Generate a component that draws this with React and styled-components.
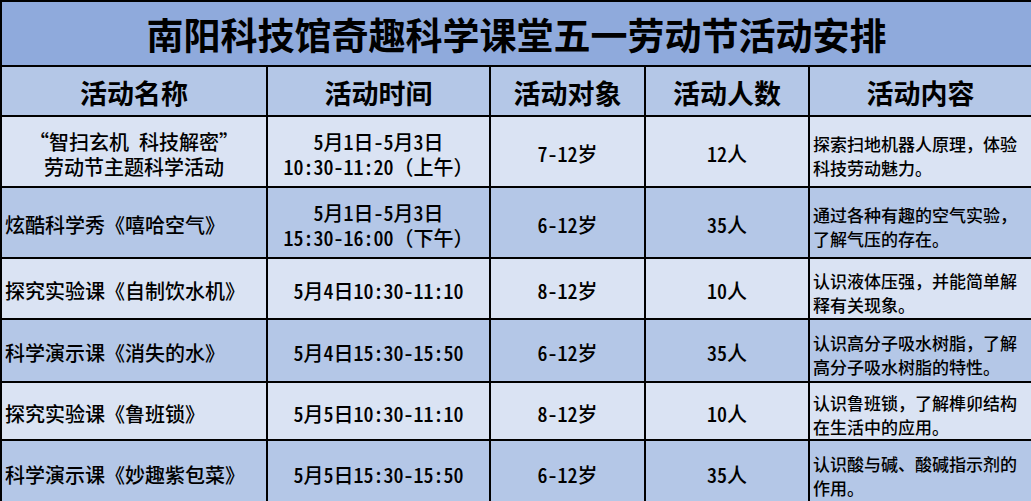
import React from 'react';
import styled, { createGlobalStyle } from 'styled-components';

const GlobalStyle = createGlobalStyle`
  html, body {
    margin: 0;
    padding: 0;
    background: #ffffff;
  }
  body {
    font-family: "Noto Sans CJK SC", "Noto Sans", sans-serif;
    color: #000000;
  }
`;

const Sheet = styled.table`
  width: 1031px;
  border-collapse: collapse;
  table-layout: fixed;
`;

const TitleRow = styled.tr`
  height: 65px;
  background: #8faadc;
`;

const TitleCell = styled.td`
  border: 2px solid #000;
  text-align: center;
  font-size: 37px;
  font-weight: 700;
  padding: 0;
`;

const HeadRow = styled.tr`
  height: 50px;
  background: #b4c7e7;
`;

const HeadCell = styled.th`
  border: 2px solid #000;
  text-align: center;
  font-size: 27px;
  font-weight: 700;
  padding: 2px 0 0;
`;

const BodyRow = styled.tr`
  height: ${p => p.$h}px;
  background: ${p => (p.$alt ? '#b4c7e7' : '#dae3f3')};
`;

const Cell = styled.td`
  border: 2px solid #000;
  text-align: ${p => p.$align || 'center'};
  font-size: 20px;
  font-weight: 500;
  line-height: 25px;
  padding: ${p => (p.$align === 'left' ? '4px 0 0 3px' : '4px 0 0')};
  white-space: nowrap;
`;

const NoteCell = styled.td`
  border: 2px solid #000;
  text-align: left;
  font-size: 17px;
  font-weight: 500;
  line-height: 24px;
  padding: 8px 4px 0 3px;
`;

// latin runs use the half-width forms, like a Hei font would
const Half = styled.span`
  font-feature-settings: "hwid";
`;

const columns = [266, 223, 155, 164, 223];
const heads = ['活动名称', '活动时间', '活动对象', '活动人数', '活动内容'];

const rows = [
  {
    h: 71,
    name: ['“智扫玄机 科技解密”', '劳动节主题科学活动'],
    center: true,
    time: ['5月1日-5月3日', '10:30-11:20（上午）'],
    age: '7-12岁',
    count: '12人',
    note: '探索扫地机器人原理，体验科技劳动魅力。',
  },
  {
    h: 71,
    name: ['炫酷科学秀《嘻哈空气》'],
    time: ['5月1日-5月3日', '15:30-16:00（下午）'],
    age: '6-12岁',
    count: '35人',
    note: '通过各种有趣的空气实验，了解气压的存在。',
  },
  {
    h: 61,
    name: ['探究实验课《自制饮水机》'],
    time: ['5月4日10:30-11:10'],
    age: '8-12岁',
    count: '10人',
    note: '认识液体压强，并能简单解释有关现象。',
  },
  {
    h: 63,
    name: ['科学演示课《消失的水》'],
    time: ['5月4日15:30-15:50'],
    age: '6-12岁',
    count: '35人',
    note: '认识高分子吸水树脂，了解高分子吸水树脂的特性。',
  },
  {
    h: 56,
    name: ['探究实验课《鲁班锁》'],
    time: ['5月5日10:30-11:10'],
    age: '8-12岁',
    count: '10人',
    note: '认识鲁班锁，了解榫卯结构在生活中的应用。',
  },
  {
    h: 64,
    name: ['科学演示课《妙趣紫包菜》'],
    time: ['5月5日15:30-15:50'],
    age: '6-12岁',
    count: '35人',
    note: '认识酸与碱、酸碱指示剂的作用。',
  },
];

const Text = ({ value }) =>
  value
    .split(/([\x20-\x7E“”]+)/)
    .map((part, i) => (i % 2 === 1 ? <Half key={i}>{part}</Half> : part));

const Lines = ({ items }) =>
  items.map((t, i) => (
    <React.Fragment key={i}>
      {i > 0 && <br />}
      <Text value={t} />
    </React.Fragment>
  ));

export default function App() {
  return (
    <>
      <GlobalStyle />
      <Sheet>
        <colgroup>
          {columns.map((w, i) => (
            <col key={i} style={{ width: w }} />
          ))}
        </colgroup>
        <tbody>
          <TitleRow>
            <TitleCell colSpan={5}>南阳科技馆奇趣科学课堂五一劳动节活动安排</TitleCell>
          </TitleRow>
          <HeadRow>
            {heads.map(h => (
              <HeadCell key={h}>{h}</HeadCell>
            ))}
          </HeadRow>
          {rows.map((r, i) => (
            <BodyRow key={i} $h={r.h} $alt={i % 2 === 1}>
              <Cell $align={r.center ? 'center' : 'left'}>
                <Lines items={r.name} />
              </Cell>
              <Cell>
                <Lines items={r.time} />
              </Cell>
              <Cell>
                <Text value={r.age} />
              </Cell>
              <Cell>
                <Text value={r.count} />
              </Cell>
              <NoteCell>{r.note}</NoteCell>
            </BodyRow>
          ))}
        </tbody>
      </Sheet>
    </>
  );
}
